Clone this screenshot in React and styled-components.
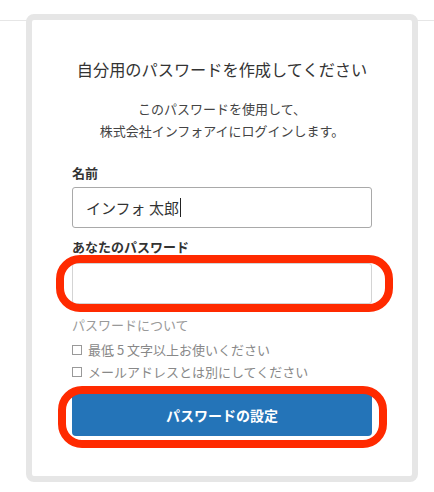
import React from "react";
import styled, { createGlobalStyle } from "styled-components";


//  Global page reset
const GlobalStyle = createGlobalStyle`
  body {
    margin: 0;
    background: #fff;
    font-family: "Noto Sans CJK JP", "Noto Sans", sans-serif;
    color: #333;
  }
`;

const Page = styled.div`
  min-height: 492px;
  padding-top: 14px;
  box-sizing: border-box;
  background: linear-gradient(#fff 20px, #e6e6e6 20px, #e6e6e6 21px, #fff 21px);
`;

const Card = styled.div`
  margin-left: 26px;
  width: 392px;
  box-sizing: border-box;
  border: 6px solid #e6e6e6;
  border-radius: 8px;
  background: #fff;
  padding: 37px 40px 40px;
  display: flex;
  flex-direction: column;
`;

const Title = styled.h1`
  margin: 0;
  font-size: 16.2px;
  font-weight: 400;
  line-height: 24px;
  text-align: center;
  color: #333;
`;

const Lead = styled.p`
  margin: 17px 0 0;
  font-size: 13px;
  line-height: 22px;
  text-align: center;
  color: #444;
`;

const Label = styled.label`
  display: block;
  margin-top: ${(p) => p.$top}px;
  margin-bottom: ${(p) => p.$bottom}px;
  font-size: 13px;
  font-weight: 700;
  line-height: 20px;
  color: #333;
`;

const Field = styled.div`
  position: relative;
`;

const Input = styled.div`
  height: 41px;
  box-sizing: border-box;
  border: 1px solid ${(p) => p.$border};
  border-radius: 3px;
  padding: 0 13px;
  display: flex;
  align-items: center;
  font-size: 15px;
  color: #333;
`;

const Caret = styled.span`
  display: inline-block;
  width: 1px;
  height: 19px;
  margin-left: 1px;
  background: #222;
`;

const Ring = styled.div`
  position: absolute;
  top: ${(p) => p.$t}px;
  bottom: ${(p) => p.$b}px;
  left: ${(p) => p.$l}px;
  right: ${(p) => p.$r}px;
  border: 8px solid #ff2a00;
  border-radius: 24px;
  pointer-events: none;
`;

const Note = styled.div`
  margin-top: 10px;
  font-size: 13px;
  line-height: 22px;
  color: #999;
`;

const Rules = styled.ul`
  list-style: none;
  margin: 3px 0 0;
  padding: 0;
`;

const Rule = styled.li`
  display: flex;
  align-items: center;
  gap: 6px;
  font-size: 13px;
  line-height: 22px;
  color: #888;
`;

const Box = styled.span`
  width: 8px;
  height: 8px;
  border: 1px solid #999;
`;

const ButtonWrap = styled.div`
  position: relative;
  margin-top: 10px;
`;

const Button = styled.button`
  width: 100%;
  height: 43px;
  border: none;
  border-radius: 4px;
  background: #2474b8;
  color: #fff;
  font-family: inherit;
  font-size: 14px;
  font-weight: 700;
`;


export default function App()
{
    const rules = ["最低 5 文字以上お使いください", "メールアドレスとは別にしてください"];

    return (
        <>
            <GlobalStyle />
            <Page>
                <Card>
                    <Title>自分用のパスワードを作成してください</Title>
                    <Lead>
                        このパスワードを使用して、<br />
                        株式会社インフォアイにログインします。
                    </Lead>

                    <Label $top={21} $bottom={4}>名前</Label>
                    <Input $border="#a9a9a9">
                        インフォ 太郎<Caret />
                    </Input>

                    <Label $top={9} $bottom={6}>あなたのパスワード</Label>
                    <Field>
                        <Input $border="#d4d4d4" />
                        <Ring $t={-8} $b={-8} $l={-16} $r={-21} />
                    </Field>

                    <Note>パスワードについて</Note>
                    <Rules>
                        {
                            //  password hints
                            rules.map((text) => (
                                <Rule key={text}>
                                    <Box />
                                    {text}
                                </Rule>
                            ))
                        }
                    </Rules>

                    <ButtonWrap>
                        <Button>パスワードの設定</Button>
                        <Ring $t={-7} $b={-12} $l={-14} $r={-15} />
                    </ButtonWrap>
                </Card>
            </Page>
        </>
    );
}
